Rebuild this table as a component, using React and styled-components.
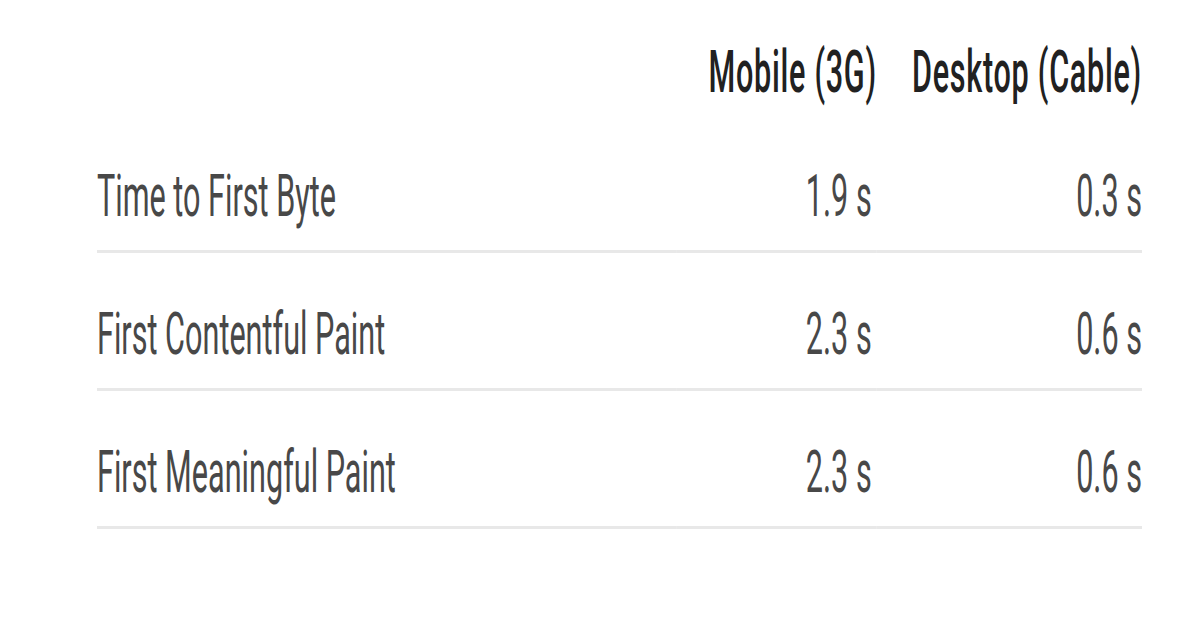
import React from 'react'
import styled, { createGlobalStyle } from 'styled-components'

const SQUEEZE = 0.51

const GlobalStyle = createGlobalStyle`
  html, body {
    margin: 0;
    padding: 0;
    background: #fff;
    font-family: Roboto, 'Liberation Sans', sans-serif;
  }
`

const Page = styled.div`
  padding: 37px 0 0 97px;
  overflow: hidden;
`

const Squeeze = styled.div`
  width: ${1045 / SQUEEZE}px;
  transform: scaleX(${SQUEEZE});
  transform-origin: left top;
`

const Table = styled.table`
  width: 100%;
  border-collapse: collapse;
  table-layout: fixed;
  font-size: 60px;
  line-height: 70px;
`

const HeadCell = styled.th`
  width: ${(props) => (props.width ? `${props.width}px` : 'auto')};
  padding: 0 0 8px 0;
  text-align: ${(props) => props.align || 'right'};
  font-weight: 500;
  letter-spacing: 1.4px;
  color: #212121;
  white-space: nowrap;
`

const Cell = styled.td`
  padding: 46px ${(props) => props.pad || 0}px 19px 0;
  text-align: ${(props) => props.align || 'right'};
  color: #484848;
  font-weight: 400;
  white-space: nowrap;
  border-bottom: 3px solid #e8e8e8;
`

const rows = [
  { label: 'Time to First Byte', mobile: '1.9 s', desktop: '0.3 s' },
  { label: 'First Contentful Paint', mobile: '2.3 s', desktop: '0.6 s' },
  { label: 'First Meaningful Paint', mobile: '2.3 s', desktop: '0.6 s' },
]

export default function App() {
  return (
    <Page>
      <GlobalStyle />
      <Squeeze>
        <Table>
          <thead>
            <tr>
              <HeadCell align='left' />
              <HeadCell width={392}>Mobile (3G)</HeadCell>
              <HeadCell width={520}>Desktop (Cable)</HeadCell>
            </tr>
          </thead>
          <tbody>
            {rows.map((r) => (
              <tr key={r.label}>
                <Cell align='left'>{r.label}</Cell>
                <Cell pad={10}>{r.mobile}</Cell>
                <Cell>{r.desktop}</Cell>
              </tr>
            ))}
          </tbody>
        </Table>
      </Squeeze>
    </Page>
  )
}
